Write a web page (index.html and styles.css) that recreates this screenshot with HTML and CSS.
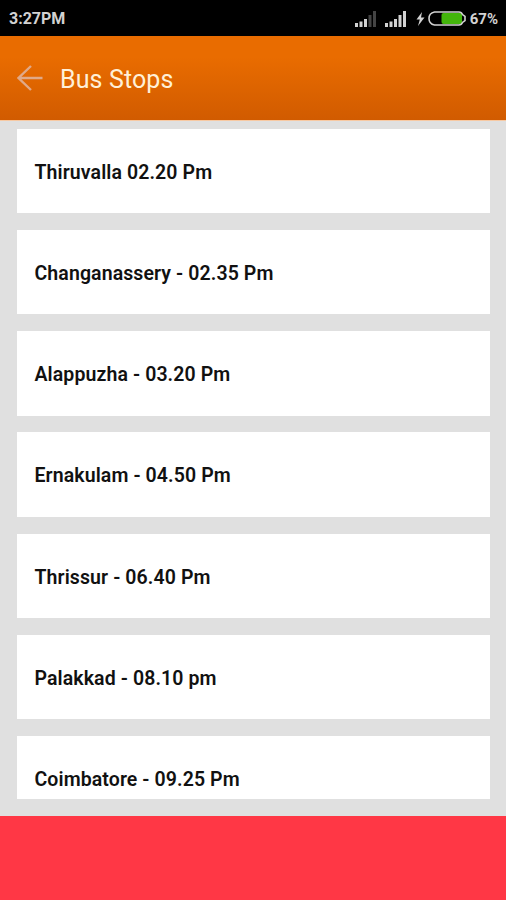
FILE: index.html
```
<!DOCTYPE html>
<html lang="en">
<head>
  <meta charset="UTF-8"/>
  <meta name="viewport" content="width=device-width,initial-scale=1.0"/>
  <title>Bus Stops</title>
  <link rel="stylesheet" href="styles.css">
</head>
<body>

  <div class="status-bar">
    <span class="clock">3:27PM</span>
    <div class="status-icons">
      <svg class="signal" viewBox="0 0 22 18">
        <path d="M0 13h3v4H0zM4.5 11.500h3V17h-3zM9 9h3v8H9z"/>
        <path class="weak" d="M13.500 5h3v12h-3zM18 1h3v16h-3z"/>
      </svg>
      <svg class="signal" viewBox="0 0 22 18">
        <path d="M0 13h3v4H0zM4.500 11.500h3V17h-3zM9 9h3v8H9zM13.500 5h3v12h-3zM18 1h3v16h-3z"/>
      </svg>
      <svg class="bolt" viewBox="0 0 9 16">
        <path d="M6 1L0.500 8.500h3.300L2 15 8.500 6.500H5z"/>
      </svg>
      <svg class="battery" viewBox="0 0 38 15">
        <rect class="charge" x="13.500" y="2" width="20.500" height="11" rx="2"/>
        <path class="shell" d="M6.500 1H31Q33.500 1 34.500 3.500L37 5.500V9.500L34.500 11.500Q33.500 14 31 14H6.500Q1 13 1 7.500T6.500 1z"/>
      </svg>
      <span class="percent">67%</span>
    </div>
  </div>

  <header class="app-bar">
    <svg class="back" viewBox="0 0 26 26">
      <path d="M25.500 13H1.500M14 1L1.500 13 14 25"/>
    </svg>
    <h1>Bus Stops</h1>
  </header>

  <main>
    <ul class="stops">
      <li>Thiruvalla 02.20 Pm</li>
      <li>Changanassery - 02.35 Pm</li>
      <li>Alappuzha - 03.20 Pm</li>
      <li>Ernakulam - 04.50 Pm</li>
      <li>Thrissur - 06.40 Pm</li>
      <li>Palakkad - 08.10 pm</li>
      <li>Coimbatore - 09.25 Pm</li>
    </ul>
  </main>

  <footer></footer>

</body>
</html>
```
FILE: styles.css
```
*,*::before,*::after { box-sizing:border-box; margin:0; padding:0 }
body {
  height: 100vh;
  display: flex;
  flex-direction: column;
  overflow: hidden;
  background: #e0e0e0;
  color: #111;
  font-family: Roboto, sans-serif;
}
.status-bar {
  flex: none;
  height: 36px;
  padding: 1px 8px 0 9px;
  display: flex;
  justify-content: space-between;
  align-items: center;
  background: #000;
  color: #d2d2d2;
  font-size: 16px;
  font-weight: 700;
}
.status-icons {
  display: flex;
  align-items: center;
}
.signal {
  width: 22px; height: 18px;
  margin-right: 8px;
  fill: #d2d2d2;
}
.signal .weak { fill:#444 }
.bolt {
  width: 9px; height: 16px;
  margin: 0 3px 0 1px;
  fill: #d2d2d2;
}
.battery {
  width: 38px; height: 15px;
  margin-right: 4px;
}
.charge { fill:#43b50b }
.shell {
  fill: none;
  stroke: #d2d2d2;
  stroke-width: 1.6;
}
.percent { font-size:15px }
.app-bar {
  flex: none;
  height: 85px;
  padding-left: 17px;
  display: flex;
  align-items: center;
  gap: 17px;
  background: linear-gradient(180deg, #e96c00 25%, #d15b00);
  border-bottom: 1px solid #f7c9a3;
}
.back {
  width: 26px; height: 26px;
  fill: none;
  stroke: #e0a988;
  stroke-width: 2.4;
}
h1 {
  padding-top: 2px;
  color: #fff0d8;
  font-size: 25px;
  font-weight: 400;
  letter-spacing: .12px;
}
main {
  flex: 1;
  min-height: 0;
  padding: 7.5px 16px 17px 17px;
}
.stops {
  height: 100%;
  overflow: hidden;
  list-style: none;
}
.stops li {
  height: 84.500px;
  margin-bottom: 16.750px;
  padding: 2.5px 17.500px 0;
  display: flex;
  align-items: center;
  background: #fff;
  font-size: 19.500px;
  font-weight: 600;
  letter-spacing: .1px;
}
footer {
  flex: none;
  height: 84px;
  background: #ff3745;
}
```
